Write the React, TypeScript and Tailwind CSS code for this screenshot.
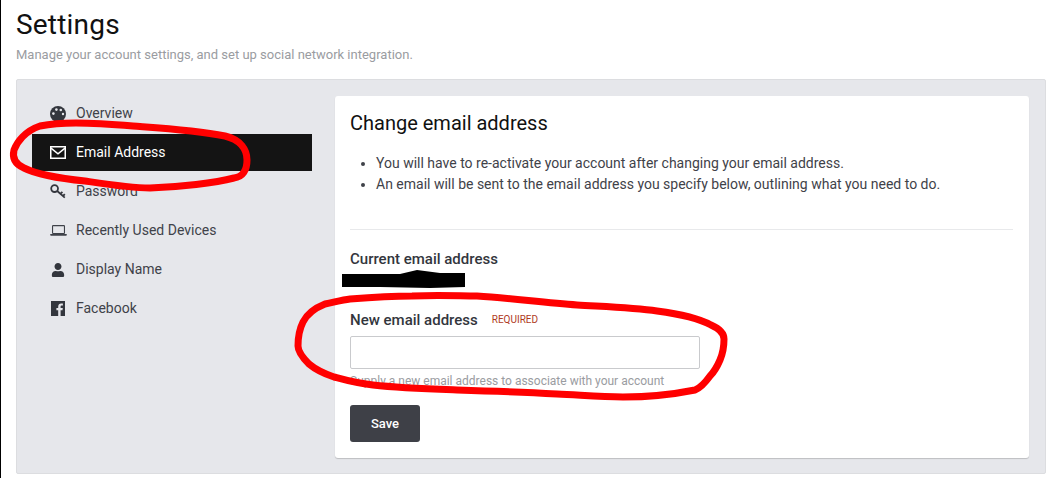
import type React from "react";
import { FaUser } from "react-icons/fa";

const PaletteIcon: React.FC = () => (
  <svg width="16" height="16" viewBox="0 0 16 16">
    <circle cx="8" cy="8" r="8" fill="#33363d" />
    <g fill="#e6e7eb">
      <circle cx="3.4" cy="7.6" r="1.3" />
      <circle cx="6.4" cy="3.6" r="1.3" />
      <circle cx="10.8" cy="4" r="1.3" />
      <circle cx="13" cy="8" r="1.2" />
    </g>
  </svg>
);

const EnvelopeIcon: React.FC = () => (
  <svg width="16" height="13" viewBox="0 0 16 13" fill="none" stroke="#fff" strokeWidth="1.5">
    <rect x="0.75" y="0.75" width="14.5" height="11.5" />
    <path d="M1 2.2l7 5.6 7-5.6" />
  </svg>
);

const KeyIcon: React.FC = () => (
  <svg width="16" height="15" viewBox="0 0 16 15" fill="none" stroke="#33363d" strokeWidth="1.8">
    <circle cx="4.6" cy="4.6" r="3.4" />
    <path d="M7.2 7l7.6 6.6M10.4 9.8l2-2M13 12l1.8-1.8" />
  </svg>
);

const LaptopIcon: React.FC = () => (
  <svg width="17" height="11" viewBox="0 0 18 12" fill="none">
    <rect x="2.5" y="0.7" width="13" height="8.6" rx="0.6" stroke="#3f4249" strokeWidth="1.2" />
    <path d="M0 9.8h18v1.1a.8.8 0 0 1-.8.8H.8a.8.8 0 0 1-.8-.8z" fill="#3f4249" />
  </svg>
);

const FacebookIcon: React.FC = () => (
  <svg width="14" height="15" viewBox="0 0 14 15">
    <rect width="14" height="15" fill="#33363d" />
    <path d="M9.6 15V9.2h1.9l.3-2.2H9.6V5.6c0-.7.2-1.1 1.1-1.1h1.2v-2c-.6-.1-1.1-.1-1.7-.1-1.8 0-3 1.1-3 3V7H5.4v2.2h1.8V15z" fill="#e6e7eb" />
  </svg>
);

const navItems = [
  { label: "Overview", icon: <PaletteIcon /> },
  { label: "Email Address", icon: <EnvelopeIcon />, active: true },
  { label: "Password", icon: <KeyIcon /> },
  { label: "Recently Used Devices", icon: <LaptopIcon /> },
  { label: "Display Name", icon: <FaUser size={14} className="ml-[1px]" /> },
  { label: "Facebook", icon: <span className="ml-[1px]"><FacebookIcon /></span> },
];

export default function App() {
  return (
    <div className="relative h-[478px] w-[1048px] overflow-hidden border-l border-black bg-white pl-[15px] font-['Roboto',sans-serif]">
      <h1 className="pt-[7px] text-[28px] leading-[36px] tracking-[0.2px] text-[#111]">Settings</h1>
      <p className="mt-[2px] text-[13px] leading-[20px] text-[#9a9ca1]">
        Manage your account settings, and set up social network integration.
      </p>

      <div className="mt-[14px] flex h-[395px] w-[1030px] rounded-[2px] border border-[#dcdde0] bg-[#e6e7eb] pt-[16px] pl-[15px]">
        {/* Menu lateral */}
        <nav className="mr-[23px] -mt-[1px] w-[280px] shrink-0">
          {navItems.map((item) => (
            <div
              key={item.label}
              className={`mb-[2px] flex h-[37px] items-center pl-[18px] text-[14px] ${
                item.active ? "bg-[#141414] text-white" : "text-[#3f4249]"
              }`}
            >
              <span className="flex w-[26px] shrink-0 justify-start text-[#33363d]">{item.icon}</span>
              {item.label}
            </div>
          ))}
        </nav>

        <main className="h-[362px] w-[694px] rounded-[3px] bg-white pt-[14px] pr-[16px] pl-[15px] shadow-[0_1px_1px_rgba(0,0,0,0.18)]">
          <h2 className="text-[20px] leading-[26px] text-[#111]">Change email address</h2>
          <ul className="mt-[17px] list-disc pl-[26px] text-[14px] leading-[21px] text-[#3f4249]">
            <li>You will have to re-activate your account after changing your email address.</li>
            <li>An email will be sent to the email address you specify below, outlining what you need to do.</li>
          </ul>
          <hr className="mt-[34px] border-t border-[#e8e9eb]" />

          <div className="mt-[19px] text-[15px] leading-[20px] font-medium text-[#33363d]">Current email address</div>
          <div className="h-[20px] text-[13px] leading-[20px] text-[#3f4249]">j</div>

          <div className="mt-[21px] flex items-center text-[15px] leading-[20px] font-medium text-[#33363d]">
            New email address
            <span className="ml-[14px] text-[10px] font-normal text-[#b03a1e]">REQUIRED</span>
          </div>
          <input
            type="text"
            className="mt-[6px] block h-[33px] w-[350px] rounded-[2px] border border-[#c9cacd] bg-white outline-none"
          />
          <p className="mt-[4px] text-[12px] leading-[16px] text-[#9a9ca1]">
            Supply a new email address to associate with your account
          </p>
          <button
            type="button"
            className="mt-[16px] h-[37px] w-[70px] rounded-[3px] bg-[#3e4047] text-[13px] font-medium text-white"
          >
            Save
          </button>
        </main>
      </div>

      {/* Annotations dessinees par-dessus la capture */}
      <svg className="pointer-events-none absolute top-0 left-[-1px]" width="1048" height="478" viewBox="0 0 1048 478" fill="none">
        <path d="M342 274L400 274L417 270L440 273L465 273L465 287L430 288L380 287L342 287Z" fill="#000" />
        <path
          d="M40 126C60 122 85 122 133 126C160 128 195 130 225 136C241 140 247 150 247 160C247 170 243 177 234 178C215 183 180 187 150 188C130 188 105 184 85 181C65 179 40 176 24 168C15 164 12 158 14 150C17 142 25 131 40 126Z"
          stroke="#f00"
          strokeWidth="7"
          strokeLinejoin="round"
        />
        <path
          d="M350 299C375 297 395 296 412 296C440 295 460 296 477 296C510 298 545 303 577 305C610 307 635 308 657 311C680 314 700 319 711 325C720 329 724 333 724 339C724 346 723 353 720 360C717 367 714 372 710 376C705 383 700 388 695 390C670 395 650 397 623 397C600 397 580 395 557 394C520 392 490 391 457 390C430 389 400 388 373 385C355 383 345 380 334 377C322 373 315 369 309 364C303 358 298 352 298 346C298 338 299 330 303 322C307 314 315 308 325 304C335 302 342 300 350 299Z"
          stroke="#f00"
          strokeWidth="7"
          strokeLinejoin="round"
        />
      </svg>
    </div>
  );
}
